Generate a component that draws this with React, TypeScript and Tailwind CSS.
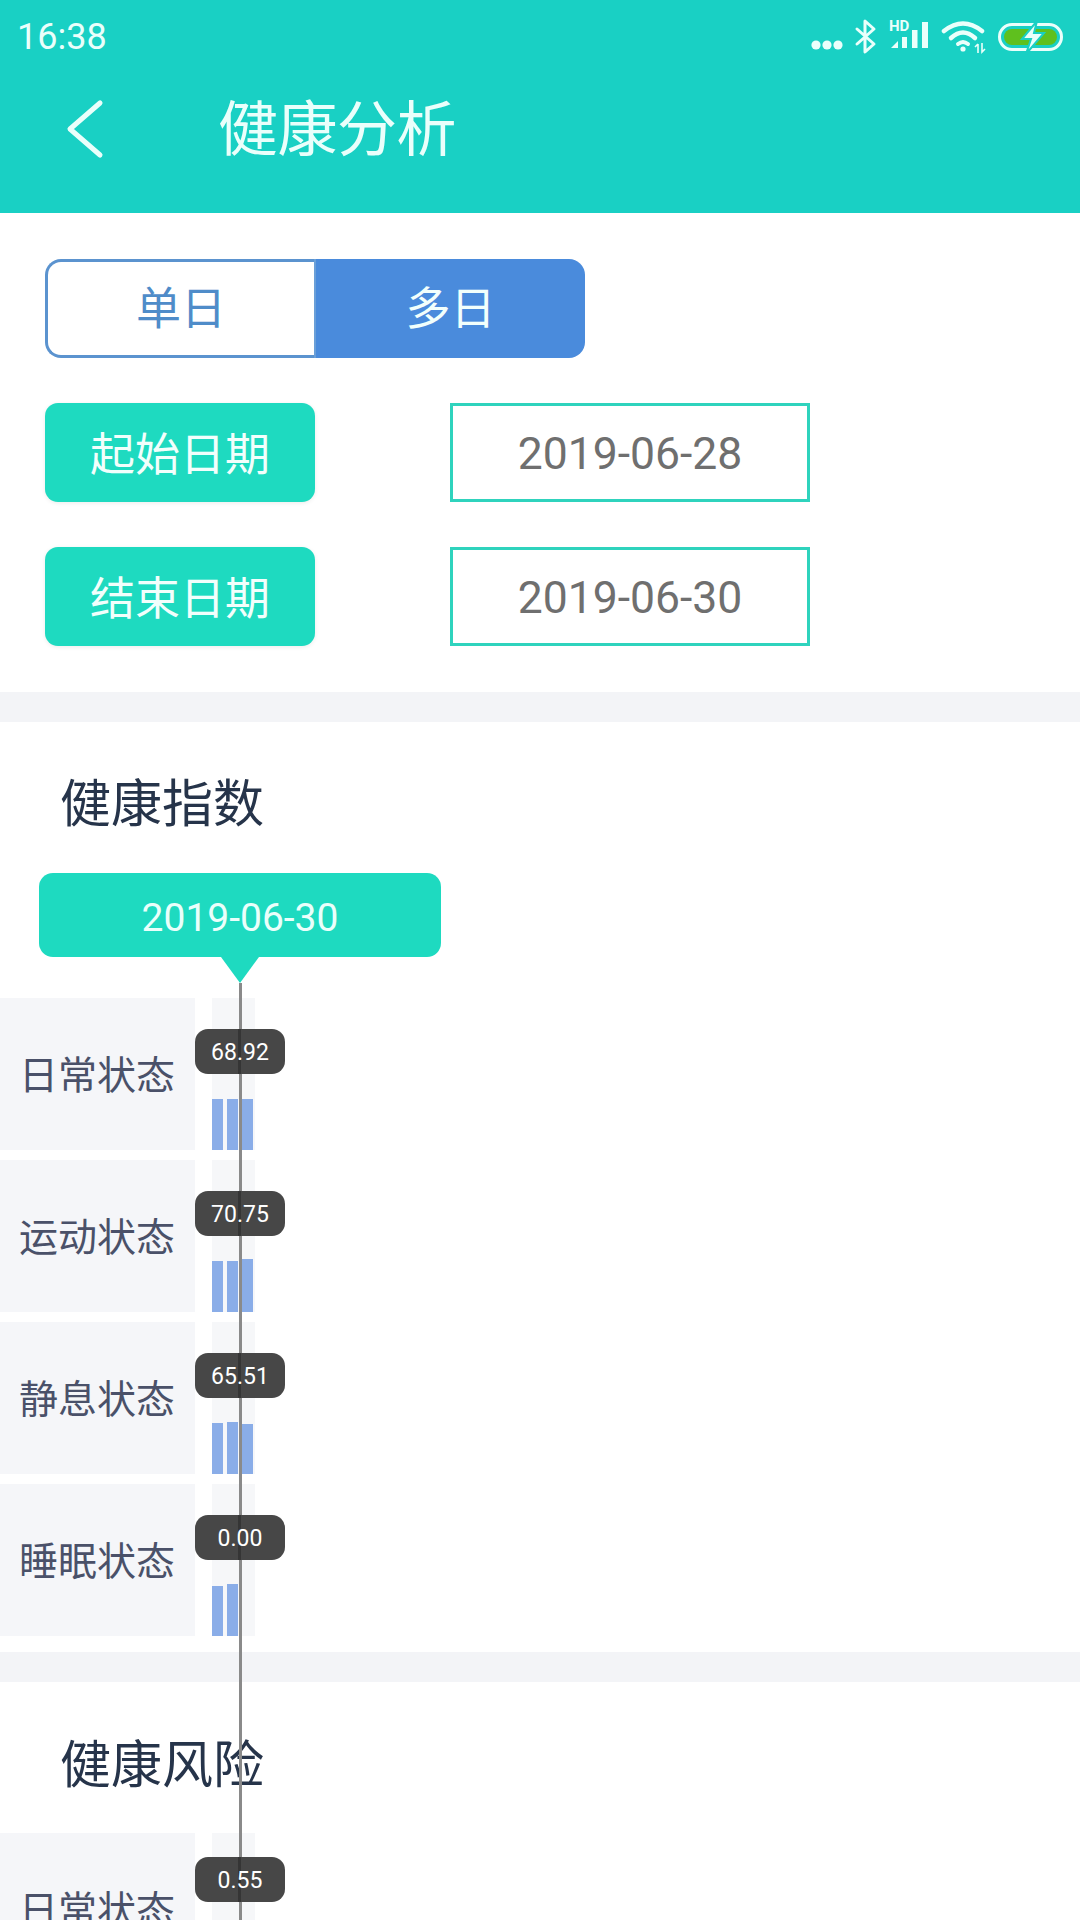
const cjk = "font-['Roboto','Noto_Sans_CJK_SC',sans-serif]";

function StatusIcons() {
  return (
    <div className="flex items-center mr-[17px]">
      <svg width="252" height="40" viewBox="0 0 252 40" fill="none">
        <circle cx="5" cy="28" r="4.6" fill="#eafffb" />
        <circle cx="16" cy="28" r="4.6" fill="#eafffb" />
        <circle cx="27" cy="28" r="4.6" fill="#eafffb" />
        <path d="M46 12 L63 27 L54 35 L54 4 L63 12 L46 27" stroke="#eafffb" strokeWidth="3" strokeLinejoin="round" strokeLinecap="round" />
        <text x="78" y="14" fill="#eafffb" fontSize="15" fontWeight="700" fontFamily="Roboto, sans-serif">HD</text>
        <path d="M80 31 L87 24 L87 31 Z" fill="#eafffb" />
        <rect x="91" y="20" width="5" height="11" fill="#eafffb" />
        <rect x="101" y="13" width="5.5" height="18" fill="#eafffb" />
        <rect x="111" y="5" width="6" height="26" fill="#eafffb" />
        <path d="M133 14 Q152 -1 171 14" stroke="#eafffb" strokeWidth="4.5" strokeLinecap="round" />
        <path d="M140 21 Q152 10 164 21" stroke="#eafffb" strokeWidth="4.5" strokeLinecap="round" />
        <path d="M147 27 Q152 23 157 27" stroke="#eafffb" strokeWidth="4" strokeLinecap="round" />
        <circle cx="152" cy="32" r="2.6" fill="#eafffb" />
        <path d="M167 27 V36 M164 30 L167 27 M171 26 V35 L174 32" stroke="#eafffb" strokeWidth="1.6" />
        <rect x="188.5" y="7.5" width="62" height="25" rx="12.5" stroke="#eafffb" strokeWidth="3" />
        <rect x="193" y="12" width="53" height="16" rx="8" fill="#5fc01e" />
        <path d="M226 4 L211 22 H220 L215 37 L233 16 H223 Z" fill="#eafffb" stroke="#19d0c4" strokeWidth="2" />
      </svg>
    </div>
  );
}

function Row({ label, value, heights, bubbleTop }: { label: string; value: string; heights: number[]; bubbleTop?: boolean }) {
  return (
    <div className="relative flex h-[152px] gap-[17px]">
      <div className="flex w-[195px] items-center justify-end bg-[#f5f6f9] pr-[20px] pt-[4px] text-[39px] leading-none text-[#4a5169]">
        {label}
      </div>
      <div className="flex w-[43px] items-end gap-[4px] bg-[#f6f7f9]">
        {heights.map((h, i) => (
          <div key={i} className="w-[11px] bg-[#8aade8]" style={{ height: h }} />
        ))}
      </div>
      <div
        className={`absolute left-[195px] z-20 flex h-[45px] w-[90px] items-center justify-center rounded-[13px] bg-[#474747] pt-[2px] text-[23px] leading-none text-white ${bubbleTop ? "top-[24px]" : "top-[31px]"}`}
      >
        <div className="absolute bottom-0 left-[43px] top-0 w-[3px] bg-black/25" />
        <span className="relative">{value}</span>
      </div>
    </div>
  );
}

function DateRow({ label, date }: { label: string; date: string }) {
  return (
    <div className="flex h-[99px] items-stretch gap-[135px]">
      <div className="flex w-[270px] items-center justify-center rounded-[13px] bg-[#1edac0] pt-[5px] text-[45px] leading-none text-[#f2fffc] shadow-[0_1px_4px_rgba(0,0,0,0.08)]">
        {label}
      </div>
      <div className="flex w-[360px] items-center justify-center border-[3px] border-[#2fd3bd] pt-[4px] text-[44.5px] leading-none text-[#6f6f6f]">
        {date}
      </div>
    </div>
  );
}

export default function App() {
  return (
    <div className={`relative h-[1920px] w-[1080px] overflow-hidden bg-white ${cjk}`}>
      <header className="h-[213px] bg-[#19d0c4] text-white">
        <div className="flex h-[74px] items-center justify-between pl-[17px]">
          <span className="text-[36px] leading-none text-[#eafffb]">16:38</span>
          <StatusIcons />
        </div>
        <div className="flex h-[110px] items-center">
          <svg className="ml-[66px]" width="38" height="60" viewBox="0 0 38 60" fill="none">
            <path d="M34 4 L4 30 L34 56" stroke="#eafffb" strokeWidth="5" strokeLinecap="round" strokeLinejoin="round" />
          </svg>
          <h1 className="ml-[114px] pt-[4px] text-[60px] font-normal leading-none tracking-[-0.5px] text-[#eafffb]">健康分析</h1>
        </div>
      </header>

      <section className="flex h-[479px] flex-col gap-[45px] px-[45px] pt-[46px]">
        <div className="flex h-[99px] w-[540px]">
          <div className="flex w-[269px] items-center justify-center rounded-l-[16px] border-[3px] border-r-0 border-[#5b93cf] pt-[2px] text-[45px] leading-none text-[#4f8cc9]">
            单日
          </div>
          <div className="flex w-[271px] items-center justify-center rounded-r-[16px] border-l-[2px] border-[#6a9fd8] bg-[#4a8bdc] pt-[2px] text-[45px] leading-none text-[#f2fffc]">
            多日
          </div>
        </div>
        <DateRow label="起始日期" date="2019-06-28" />
        <DateRow label="结束日期" date="2019-06-30" />
      </section>

      <div className="h-[30px] bg-[#f3f4f7]" />

      <section className="h-[930px]">
        <h2 className="flex h-[151px] items-center pl-[60px] pt-[14px] text-[51px] font-normal leading-none text-[#26344a]">
          健康指数
        </h2>
        <div className="relative ml-[39px] flex h-[84px] w-[402px] items-center justify-center rounded-[14px] bg-[#1edac0] pt-[6px] text-[39px] leading-none text-[#eafffb]">
          2019-06-30
          <div className="absolute left-[182px] top-[84px] h-0 w-0 border-x-[19px] border-t-[26px] border-x-transparent border-t-[#1edac0]" />
        </div>
        <div className="mt-[41px] flex flex-col gap-[10px]">
          <Row label="日常状态" value="68.92" heights={[51, 51, 51]} />
          <Row label="运动状态" value="70.75" heights={[51, 51, 53]} />
          <Row label="静息状态" value="65.51" heights={[51, 52, 50]} />
          <Row label="睡眠状态" value="0.00" heights={[50, 52]} />
        </div>
      </section>

      <div className="h-[30px] bg-[#f3f4f7]" />

      <section>
        <h2 className="flex h-[151px] items-center pl-[60px] pt-[16px] text-[51px] font-normal leading-none text-[#26344a]">
          健康风险
        </h2>
        <Row label="日常状态" value="0.55" heights={[]} bubbleTop />
      </section>

      <div className="absolute bottom-0 left-[239px] top-[983px] z-10 w-[3px] bg-[#8a8a8a]" />
    </div>
  );
}
